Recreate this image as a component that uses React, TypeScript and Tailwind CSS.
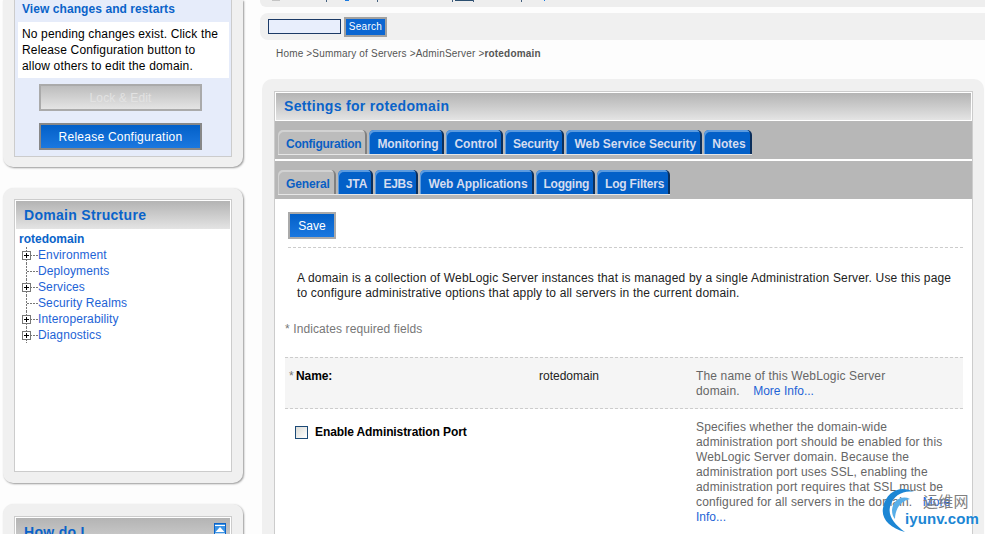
import React from "react";

const tabs1 = [
  { label: "Configuration", fit: "tracking-[-0.25px]" },
  { label: "Monitoring", fit: "tracking-[-0.1px]" },
  { label: "Control", fit: "" },
  { label: "Security", fit: "tracking-[-0.25px]" },
  { label: "Web Service Security", fit: "" },
  { label: "Notes", fit: "" },
];
const tabs2 = [
  { label: "General", fit: "tracking-[-0.15px]" },
  { label: "JTA", fit: "" },
  { label: "EJBs", fit: "tracking-[-0.25px]" },
  { label: "Web Applications", fit: "tracking-[-0.06px]" },
  { label: "Logging", fit: "tracking-[-0.25px]" },
  { label: "Log Filters", fit: "tracking-[-0.2px]" },
];
const tree = [
  { label: "Environment", plus: true },
  { label: "Deployments", plus: false },
  { label: "Services", plus: true },
  { label: "Security Realms", plus: false },
  { label: "Interoperability", plus: true },
  { label: "Diagnostics", plus: true },
];

const TreeMark = ({ plus }: { plus: boolean }) => (
  <svg width="19" height="16" viewBox="0 0 19 16" className="shrink-0">
    <path d="M7.5 0V16" stroke="#777" strokeDasharray="2 1" fill="none" />
    <path d="M8 8.5H19" stroke="#777" strokeDasharray="2 1" fill="none" />
    {plus && (
      <>
        <rect x="3.5" y="4.5" width="8" height="8" fill="#fff" stroke="#777" />
        <path d="M5 8.5H10M7.5 6V11" stroke="#000" fill="none" />
      </>
    )}
  </svg>
);

const Tabs = ({ items }: { items: { label: string; fit: string }[] }) => (
  <div className="flex h-[38px] items-end bg-[#b7b7b7] pl-[3px]">
    <div className="mb-[4px] flex h-[25px] items-stretch gap-[2px] border-b border-[#e6e6e6]">
      {items.map((t, i) => (
        <div
          key={t.label}
          className={
            i === 0
              ? "flex items-center rounded-t-[5px] border-r-2 border-r-[#808080] bg-[#bcbcbc] pl-2 pr-1 pt-[3px] text-[12px] font-bold text-[#0a5fc4] shadow-[inset_1px_2px_0_#d2d2d2]"
              : "flex items-center rounded-t-[5px] border-r-2 border-r-[#0b2f5c] bg-[#0360c8] pl-2 pr-1 pt-[3px] text-[12px] font-bold text-[#d5dcef] shadow-[inset_1px_2px_0_#5b9be0]"
          }
        >
          <span className={t.fit}>{t.label}</span>
        </div>
      ))}
    </div>
  </div>
);

const Watermark = () => (
  <div className="absolute left-[880px] top-[486px] h-[48px] w-[104px]">
    <svg width="44" height="48" viewBox="0 0 44 48" className="absolute left-0 top-0">
      <path d="M34 6C22 -1 6 4 3 22C1 33 10 42 25 46C14 38 8 30 10 21C13 9 24 4 34 6Z" fill="#1c86d4" />
      <path d="M30 13C22 9 13 14 12 24C12 28 13 31 15 33C15 24 20 15 30 13Z" fill="#58aee8" />
    </svg>
    <span className="absolute left-[43px] top-[6px] text-[15px] leading-[18px] tracking-[0.2px] text-[#808080] font-['Noto_Sans_CJK_SC',sans-serif]">运维网</span>
    <span className="absolute left-[25px] top-[24px] text-[15px] font-bold leading-[18px] tracking-[0.1px] text-[#1c86d4] [text-shadow:0_0_2px_#fff]">iyunv.com</span>
  </div>
);

export default function App() {
  return (
    <div className="relative flex h-[534px] w-[985px] overflow-hidden bg-[#fdfdfd] font-['Liberation_Sans',Arial,sans-serif] text-[12px]">
      {/* left column */}
      <div className="w-[260px] shrink-0 pl-[3px]">
        <div className="h-[167px] w-[240px] rounded-b-[10px] bg-[#f0f0f0] px-[11px] shadow-[1px_1px_2px_#999]">
          <div className="flex h-[157px] flex-col items-start border-x border-b border-[#ccc] bg-[#e6ecfa]">
            <div className="h-[22px] w-full pl-[7px] text-[12px] font-bold tracking-[0.07px] text-[#0a63c9]">View changes and restarts</div>
            <div className="ml-[3px] h-[56px] w-[211px] bg-white px-1 pt-[4px] text-[12px] leading-4 tracking-[0.15px] text-black">
              No pending changes exist. Click the Release Configuration button to allow others to edit the domain.
            </div>
            <div className="ml-6 mt-[6px] flex h-[27px] w-[163px] items-center justify-center border-2 border-[#aaa] bg-gradient-to-b from-[#bdbdbd] to-[#e4e4e4] text-[12px] tracking-[0.1px] text-[#e2e2e2]">Lock &amp; Edit</div>
            <div className="ml-6 mt-3 flex h-[27px] w-[163px] items-center justify-center border-2 border-[#888] bg-gradient-to-b from-[#0360c8] to-[#1a78e0] text-[12px] tracking-[0.24px] text-white">Release Configuration</div>
          </div>
        </div>

        <div className="mt-[21px] h-[295px] w-[240px] rounded-[10px] bg-[#f0f0f0] px-[11px] pt-[11px] shadow-[1px_1px_2px_#999]">
          <div className="h-[273px] border border-[#ccc] bg-white">
            <div className="m-px flex h-[28px] items-center bg-gradient-to-b from-[#b4b4b4] to-[#e4e4e4] pl-2 text-[14px] font-bold tracking-[0.3px] text-[#0a63c9]">Domain Structure</div>
            <div className="pl-1 pt-px">
              <div className="h-4 text-[12px] font-bold leading-4 text-[#0a63c9]">rotedomain</div>
              {tree.map((n) => (
                <div key={n.label} className="flex h-4 items-center text-[12px] tracking-[0.12px] text-[#1d63d6]">
                  <TreeMark plus={n.plus} />
                  <span>{n.label}</span>
                </div>
              ))}
            </div>
          </div>
        </div>

        <div className="mt-[21px] h-[60px] w-[240px] rounded-[10px] bg-[#f0f0f0] px-[11px] pt-3 shadow-[1px_1px_2px_#999]">
          <div className="h-full border border-[#ccc] bg-white p-px">
            <div className="flex h-full items-start justify-between bg-gradient-to-b from-[#b4b4b4] to-[#e4e4e4] pl-2 pr-[4px] pt-[4px] text-[14px] font-bold tracking-[0.3px] text-[#0a63c9]">
              <span className="leading-5">How do I</span>
              <svg width="12" height="12" viewBox="0 0 12 12" className="mt-px">
                <rect x="0.5" y="0.5" width="11" height="11" fill="#3d94e4" stroke="#0a63c9" />
                <path d="M1 2.5H11" stroke="#fff" />
                <path d="M6 4L10.5 9H1.5Z" fill="#fff" />
                <path d="M1 10.5H11" stroke="#bcd9f5" />
              </svg>
            </div>
          </div>
        </div>
      </div>

      {/* right column */}
      <div className="min-w-0 flex-1">
        <div className="h-[7px] rounded-bl-[6px] bg-[#eeeeee]">
          {/* tail of the menu line, cut off by the top of the window */}
          <svg width="725" height="7" viewBox="0 0 725 7" className="block">
            <rect x="12" y="0" width="8" height="1" fill="#c4c4c4" />
            <path d="M66.5 0V2M117.5 0V2M192.5 0V2M213.5 0V2M261.5 0V2" stroke="#44607f" fill="none" />
            <rect x="85" y="0" width="4" height="1" fill="#1a7ae0" />
            <rect x="195" y="0" width="18" height="1" fill="#2c4f70" />
            <rect x="284" y="0" width="1" height="1" fill="#1a7ae0" />
          </svg>
        </div>
        <div className="mt-[6px] flex h-[27px] items-center rounded-l-[8px] bg-[#f0f0f0] pl-2">
          <div className="h-[15px] w-[73px] border border-[#1c3a66] bg-[#e8eefc]" />
          <div className="ml-[3px] flex h-5 w-[43px] items-center justify-center border-2 border-[#a0a0a0] bg-[#0a66d2] text-[10px] tracking-[0.3px] text-white">Search</div>
        </div>
        <div className="mt-2 h-[12px] pl-4 text-[10px] leading-3 tracking-[0.18px] text-[#555]">
          Home &gt;Summary of Servers &gt;AdminServer &gt;<b>rotedomain</b>
        </div>
        <div className="ml-[2px] mr-px mt-[19px] h-[500px] rounded-t-[10px] bg-[#f0f0f0] pl-3 pr-[11px] pt-3">
          <div className="h-full border border-[#ccc] bg-white">
            <div className="m-px mb-0 flex h-[27px] items-center bg-gradient-to-b from-[#b4b4b4] to-[#e4e4e4] pl-2 text-[14px] font-bold tracking-[0.32px] text-[#0a63c9]">Settings for rotedomain</div>
            <div className="mt-px flex flex-col gap-[2px]">
              <Tabs items={tabs1} />
              <Tabs items={tabs2} />
            </div>
            <div className="pl-[10px] pr-[9px] pt-[13px]">
              <div className="ml-[3px] flex h-[27px] w-12 items-center justify-center border-2 border-[#aaa] bg-gradient-to-b from-[#0360c8] to-[#1a78e0] text-[12px] text-white">Save</div>
              <div className="ml-[3px] mt-2 border-t border-dashed border-[#ccc]" />
              <p className="ml-3 mt-[23px] w-[657px] text-[12px] leading-[15px] tracking-[0.17px] text-[#222]">
                A domain is a collection of WebLogic Server instances that is managed by a single Administration Server. Use this page to configure administrative options that apply to all servers in the current domain.
              </p>
              <div className="mt-[21px] text-[12px] leading-[15px] tracking-[0.1px] text-[#777]">* Indicates required fields</div>
              <div className="mt-5 flex h-[52px] border-y border-dashed border-[#ccc] bg-[#f5f5f5] pt-[11px] leading-[15px]">
                <div className="flex w-[254px] pl-1 font-bold tracking-[-0.1px] text-black"><span className="w-[7px] font-normal text-[#777]">*</span>Name:</div>
                <div className="w-[157px] text-[#222]">rotedomain</div>
                <div className="w-[216px] tracking-[0.15px] text-[#666]">The name of this WebLogic Server domain. &nbsp; <span className="ml-[3px] tracking-normal text-[#1d63d6]">More Info...</span></div>
              </div>
              <div className="flex pt-[11px] leading-[15px]">
                <div className="flex w-[411px] items-start pl-[10px] pt-[5px] font-bold tracking-[-0.1px] text-black">
                  <span className="mr-[7px] mt-[1px] h-[13px] w-[13px] border border-[#1c4a77] bg-gradient-to-br from-[#dcdcd7] to-white" />
                  <span>Enable Administration Port</span>
                </div>
                <div className="w-[258px] tracking-[0.15px] text-[#666]">
                  Specifies whether the domain-wide administration port should be enabled for this WebLogic Server domain. Because the administration port uses SSL, enabling the administration port requires that SSL must be configured for all servers in the domain. &nbsp; <span className="tracking-normal text-[#1d63d6]">More Info...</span>
                </div>
              </div>
            </div>
          </div>
        </div>
      </div>
      <Watermark />
    </div>
  );
}
